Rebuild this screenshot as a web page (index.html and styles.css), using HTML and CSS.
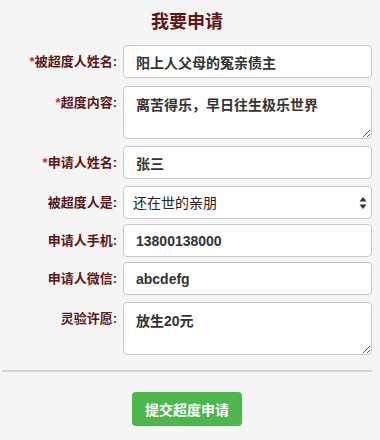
FILE: index.html
```html
<!DOCTYPE html>
<html lang="zh-CN">
<head>
  <meta charset="UTF-8">
  <meta name="viewport" content="width=device-width, initial-scale=1.0">
  <title>我要申请</title>
  <link rel="stylesheet" href="styles.css">
</head>
<body>
  <div class="form-box">
    <h1 class="title">我要申请</h1>
    <form class="apply-form">
      <div class="row gap-8">
        <label class="row-label"><span class="req">*</span>被超度人姓名:</label>
        <input class="field" type="text" value="阳上人父母的冤亲债主">
      </div>
      <div class="row">
        <label class="row-label"><span class="req">*</span>超度内容:</label>
        <textarea class="field area">离苦得乐，早日往生极乐世界</textarea>
      </div>
      <div class="row">
        <label class="row-label"><span class="req">*</span>申请人姓名:</label>
        <input class="field" type="text" value="张三">
      </div>
      <div class="row gap-5">
        <label class="row-label">被超度人是:</label>
        <div class="select-wrap">
          <select class="field select">
            <option>还在世的亲朋</option>
            <option>已故的亲人</option>
          </select>
          <svg class="select-arrows" width="8" height="12" viewBox="0 0 8 12">
            <path d="M4 0 L7.5 4.5 L0.5 4.5 Z" fill="#333"/>
            <path d="M4 12 L7.5 7.5 L0.5 7.5 Z" fill="#333"/>
          </svg>
        </div>
      </div>
      <div class="row gap-5">
        <label class="row-label">申请人手机:</label>
        <input class="field" type="text" value="13800138000">
      </div>
      <div class="row">
        <label class="row-label">申请人微信:</label>
        <input class="field" type="text" value="abcdefg">
      </div>
      <div class="row">
        <label class="row-label">灵验许愿:</label>
        <textarea class="field area">放生20元</textarea>
      </div>
      <hr class="divider">
      <div class="actions">
        <button type="button" class="submit-btn">提交超度申请</button>
      </div>
    </form>
  </div>
</body>
</html>
```

FILE: styles.css
```css
body {
  margin: 0;
  padding: 0 8px 0 2px;
  background-color: #f5f5f5;
  font-family: "Liberation Sans", "Noto Sans CJK SC", sans-serif;
  color: #333;
}

.form-box {
  width: 370px;
}

.title {
  margin: 10px 0 11px;
  font-size: 18px;
  line-height: 24px;
  text-align: center;
  color: #5c1616;
}

.row {
  display: flex;
  align-items: flex-start;
  margin-bottom: 7px;
}

.row.gap-8 {
  margin-bottom: 8px;
}

.row.gap-5 {
  margin-bottom: 5px;
}

.row-label {
  width: 115px;
  margin-right: 6px;
  text-align: right;
  font-size: 13px;
  font-weight: bold;
  line-height: 33px;
  color: #5c1616;
  white-space: nowrap;
}

.req {
  color: #e02020;
}

.field {
  flex: 1;
  box-sizing: border-box;
  height: 33px;
  margin: 0;
  padding: 0 12px;
  border: 1px solid #c8c8c8;
  border-radius: 4px;
  background-color: #fff;
  font-family: "Liberation Sans", "Noto Sans CJK SC", sans-serif;
  font-size: 14px;
  font-weight: bold;
  color: #333;
  outline: none;
}

.area {
  height: 53px;
  padding: 8px 12px;
  line-height: 20px;
  resize: vertical;
}

.select-wrap {
  flex: 1;
  position: relative;
  display: flex;
}

.select {
  width: 100%;
  padding-left: 9px;
  font-weight: normal;
  color: #222;
  appearance: none;
  -webkit-appearance: none;
}

.select-arrows {
  position: absolute;
  right: 5px;
  top: 11px;
}

.divider {
  margin: 15px 0 20px;
  border: none;
  border-top: 2px solid #d4d4d4;
}

.actions {
  text-align: center;
}

.submit-btn {
  height: 34px;
  padding: 0 13px;
  border: none;
  border-radius: 4px;
  background-color: #4cb84c;
  color: #fff;
  font-family: "Liberation Sans", "Noto Sans CJK SC", sans-serif;
  font-size: 14px;
  font-weight: bold;
  cursor: pointer;
}
```
